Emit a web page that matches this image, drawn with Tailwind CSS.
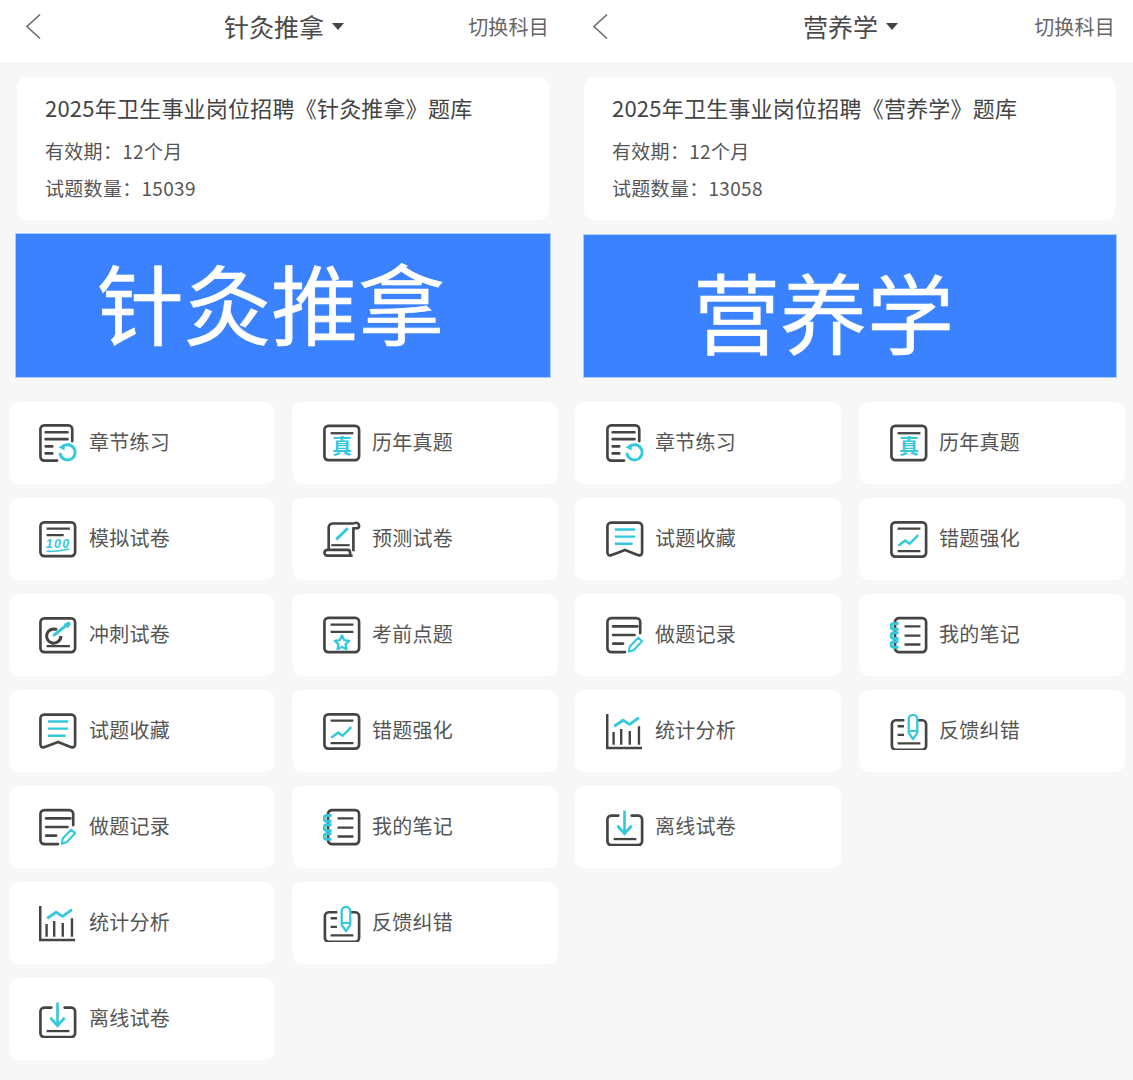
<!DOCTYPE html>
<html lang="zh-CN">
<head>
  <meta charset="UTF-8">
  <meta name="viewport" content="width=device-width, initial-scale=1.0">
  <title>题库</title>
  <script src="https://cdn.jsdelivr.net/npm/@tailwindcss/browser@4"></script>
</head>
<body class="bg-[#f7f7f7] font-['Noto_Sans_CJK_SC',sans-serif] text-[#4d4d4d]">

  <!-- 图标 -->
  <svg class="hidden">
    <defs>
      <symbol id="i-chapter" viewBox="0 0 40 40">
        <g fill="none" stroke="#444" stroke-width="2.8" stroke-linecap="round">
          <path d="M19 38.500H5.500a4 4 0 0 1-4-4V5.500a4 4 0 0 1 4-4H31a4 4 0 0 1 4 4V18"/>
          <path d="M7 8.700H30M7 16H30M7 23.500H14M7 31H14"/>
        </g>
        <path d="M24 24.500a8 8 0 1 1-2 6" fill="none" stroke="#33c8dc" stroke-width="3"/>
        <path d="M20.500 24.500l6.500-3.500v7z" fill="#33c8dc"/>
      </symbol>
      <symbol id="i-mock" viewBox="0 0 40 40">
        <rect x="1.500" y="2.500" width="36.500" height="35.500" rx="4" fill="none" stroke="#444" stroke-width="2.800"/>
        <path d="M8 9H32.500M8 16H26" stroke="#444" stroke-width="2.400"/>
        <text x="7" y="29" font-family="Liberation Sans" font-size="13" font-style="italic" font-weight="700" fill="#33c8dc" textLength="25">100</text>
        <path d="M8 33Q20 33.500 32 30.500" fill="none" stroke="#33c8dc" stroke-width="1.600"/>
      </symbol>
      <symbol id="i-sprint" viewBox="0 0 40 40">
        <rect x="1.500" y="2.500" width="36.500" height="35.500" rx="4" fill="none" stroke="#444" stroke-width="2.800"/>
        <path d="M8 31.700H32.500" stroke="#444" stroke-width="2.400"/>
        <path d="M19 14.500a7.500 7.500 0 1 0 4 6.500" fill="none" stroke="#444" stroke-width="3.200"/>
        <path d="M16 20L31 8" stroke="#33c8dc" stroke-width="3.200" stroke-linecap="round"/>
        <path d="M26 8.500l6-3 1.500 3.500-3.500 4z" fill="#33c8dc"/>
      </symbol>
      <symbol id="i-collect" viewBox="0 0 40 40">
        <path d="M5.500 2.700H34a4 4 0 0 1 4 4V34q0 4-4 3L20 31.500 5.500 37q-4 1-4-3V6.700a4 4 0 0 1 4-4z" fill="none" stroke="#444" stroke-width="2.800" stroke-linejoin="round"/>
        <path d="M9.300 10H30.700M9.300 17.500H30.700M9.300 25H28" stroke="#33c8dc" stroke-width="2.600"/>
      </symbol>
      <symbol id="i-record" viewBox="0 0 40 40">
        <g fill="none" stroke="#444" stroke-width="2.800" stroke-linecap="round">
          <path d="M20 38H5.500a4 4 0 0 1-4-4V6.300a4 4 0 0 1 4-4H32a4 4 0 0 1 4 4V18"/>
          <path d="M7.500 11H33M7.500 20H30M7.500 29H18"/>
        </g>
        <path d="M24 37.500l1-5.500 9-9 4 3.500-9 9.500z" fill="none" stroke="#33c8dc" stroke-width="2.200" stroke-linejoin="round"/>
      </symbol>
      <symbol id="i-stats" viewBox="0 0 40 40">
        <path d="M1.300 2V38H38" fill="none" stroke="#444" stroke-width="2.600"/>
        <path d="M8 21V34.500M16 18V34.500M25 20V34.500M34.700 15V34.500" stroke="#444" stroke-width="2.500"/>
        <path d="M8.700 15L18 8.700 25 13 34.700 6" fill="none" stroke="#33c8dc" stroke-width="3"/>
      </symbol>
      <symbol id="i-offline" viewBox="0 0 40 40">
        <path d="M13 8H5.500a4 4 0 0 0-4 4V35a4 4 0 0 0 4 4H34a4 4 0 0 0 4-4V12a4 4 0 0 0-4-4H27" fill="none" stroke="#444" stroke-width="2.800" stroke-linecap="round"/>
        <path d="M8 32.700H32" stroke="#444" stroke-width="2.400"/>
        <path d="M19.500 2.700V27M12 18.700L19.500 27 27 18.700" fill="none" stroke="#33c8dc" stroke-width="2.800"/>
      </symbol>
      <symbol id="i-past" viewBox="0 0 40 40">
        <rect x="1.500" y="2" width="36.500" height="36" rx="4" fill="none" stroke="#444" stroke-width="2.800"/>
        <path d="M8 9.700H32" stroke="#444" stroke-width="2.400"/>
        <text x="20" y="31.500" text-anchor="middle" font-family="Noto Sans CJK SC" font-size="21" font-weight="700" fill="#33c8dc">真</text>
      </symbol>
      <symbol id="i-predict" viewBox="0 0 40 40">
        <g fill="none" stroke="#444" stroke-width="2.800" stroke-linejoin="round">
          <path d="M33 3.700H10a4 4 0 0 0-4 4V31"/>
          <path d="M33 3.700a3 3 0 0 1 5 2.500q0 2.500-3 2.500H32V33"/>
          <path d="M30 37.500H4.500a2.700 2.700 0 0 1 0-6H26q2.500 0 2.500 3t1.500 3z"/>
        </g>
        <path d="M8.700 26.500H28" stroke="#444" stroke-width="2.200"/>
        <path d="M14 20.500L26 8.700" stroke="#33c8dc" stroke-width="3.200"/>
      </symbol>
      <symbol id="i-point" viewBox="0 0 40 40">
        <rect x="1.500" y="2" width="36.500" height="36" rx="4" fill="none" stroke="#444" stroke-width="2.800"/>
        <path d="M8 9H32M8 16.700H32" stroke="#444" stroke-width="2.400"/>
        <path d="M20 20.500l2.300 4.900 5.300.700-3.900 3.700 1 5.300-4.700-2.600-4.700 2.600 1-5.300-3.900-3.700 5.300-.7z" fill="none" stroke="#33c8dc" stroke-width="2.400" stroke-linejoin="round"/>
      </symbol>
      <symbol id="i-wrong" viewBox="0 0 40 40">
        <rect x="1.500" y="2.500" width="36.500" height="36" rx="4" fill="none" stroke="#444" stroke-width="2.800"/>
        <path d="M8 9H32M8 32.700H32" stroke="#444" stroke-width="2.400"/>
        <path d="M8.700 27L16 21.700 20.700 25 29.700 16" fill="none" stroke="#33c8dc" stroke-width="2.600"/>
      </symbol>
      <symbol id="i-note" viewBox="0 0 40 40">
        <path d="M9 2.300H34a4 4 0 0 1 4 4V34a4 4 0 0 1-4 4H9a4 4 0 0 1-3.700-4V6.300A4 4 0 0 1 9 2.300z" fill="none" stroke="#444" stroke-width="2.800"/>
        <path d="M15.300 11H32M15.300 20.700H32M15.300 30H32" stroke="#444" stroke-width="2.400"/>
        <g fill="none" stroke="#33c8dc" stroke-width="3.200">
          <path d="M9 8H4a3 3 0 0 0 0 6H9M9 17.700H4a3 3 0 0 0 0 6H9M9 27H4a3 3 0 0 0 0 6H9"/>
        </g>
      </symbol>
      <symbol id="i-feedback" viewBox="0 0 40 40">
        <path d="M14 8.700H6a4 4 0 0 0-4 4V35.700a4 4 0 0 0 4 4H34a4 4 0 0 0 4-4V12.700a4 4 0 0 0-4-4H30" fill="none" stroke="#444" stroke-width="2.800" stroke-linecap="round"/>
        <path d="M8 15H14.700M8 24H14.700M8 33H32" stroke="#444" stroke-width="2.400"/>
        <path d="M19.700 7.500a4.500 4.500 0 0 1 9 0V22L24.200 28.500 19.700 22z" fill="none" stroke="#33c8dc" stroke-width="2.400" stroke-linejoin="round"/>
        <path d="M19.700 20H28.700" stroke="#33c8dc" stroke-width="2"/>
      </symbol>
    </defs>
  </svg>

  <div class="flex w-[1133px] h-[1080px] overflow-hidden">

    <!-- 左：针灸推拿 -->
    <section class="w-[566px] shrink-0">
      <header class="h-[62px] bg-white flex items-center justify-between pl-[25px] pr-[17px] pb-[9px]">
        <div class="w-[94px]">
          <svg width="16" height="27" viewBox="0 0 16 27" fill="none" stroke="#707070" stroke-width="1.700"><path d="M15 1.500L2 13.500 15 25.500"/></svg>
        </div>
        <div class="flex items-center gap-2 text-[25px] leading-none text-[#4a4a4a]">
          <span>针灸推拿</span>
          <span class="w-0 h-0 border-x-[6px] border-x-transparent border-t-[7px] border-t-[#444]"></span>
        </div>
        <div class="w-[100px] text-right text-[20px] tracking-[0.2px] text-[#666]">切换科目</div>
      </header>

      <div class="ml-[17px] mt-[15px] w-[532px] h-[143px] rounded-[10px] bg-white pl-[28px] pt-[13px]">
        <h2 class="text-[22px] tracking-[0.22px] leading-[34px] text-[#444] whitespace-nowrap">2025年卫生事业岗位招聘《针灸推拿》题库</h2>
        <p class="mt-[13px] text-[19px] tracking-[0.3px] leading-[28px] text-[#555]">有效期：12个月</p>
        <p class="mt-[9px] text-[19px] tracking-[0.3px] leading-[28px] text-[#555]">试题数量：15039</p>
      </div>

      <div class="ml-[15px] mt-[13px] w-[536px] h-[145px] bg-[#3a82ff] border border-[#a9cffc] flex items-center pl-[81px] pb-[9px] text-white text-[87px] [-webkit-text-stroke:0.6px_#fff] leading-none whitespace-nowrap">针灸推拿</div>

      <div class="ml-[9px] mt-[24px] grid grid-cols-[266px_266px] gap-x-[17px] gap-y-[14px]">
        <a class="h-[82px] rounded-[10px] bg-white flex items-center gap-[12px] pl-[30px] text-[20px] tracking-[0.25px] text-[#555]"><svg class="size-[38px] shrink-0"><use href="#i-chapter"/></svg><span class="pb-[2px]">章节练习</span></a>
        <a class="h-[82px] rounded-[10px] bg-white flex items-center gap-[11px] pl-[31px] text-[20px] tracking-[0.25px] text-[#555]"><svg class="size-[38px] shrink-0"><use href="#i-past"/></svg><span class="pb-[2px]">历年真题</span></a>
        <a class="h-[82px] rounded-[10px] bg-white flex items-center gap-[12px] pl-[30px] text-[20px] tracking-[0.25px] text-[#555]"><svg class="size-[38px] shrink-0"><use href="#i-mock"/></svg><span class="pb-[2px]">模拟试卷</span></a>
        <a class="h-[82px] rounded-[10px] bg-white flex items-center gap-[11px] pl-[31px] text-[20px] tracking-[0.25px] text-[#555]"><svg class="size-[38px] shrink-0"><use href="#i-predict"/></svg><span class="pb-[2px]">预测试卷</span></a>
        <a class="h-[82px] rounded-[10px] bg-white flex items-center gap-[12px] pl-[30px] text-[20px] tracking-[0.25px] text-[#555]"><svg class="size-[38px] shrink-0"><use href="#i-sprint"/></svg><span class="pb-[2px]">冲刺试卷</span></a>
        <a class="h-[82px] rounded-[10px] bg-white flex items-center gap-[11px] pl-[31px] text-[20px] tracking-[0.25px] text-[#555]"><svg class="size-[38px] shrink-0"><use href="#i-point"/></svg><span class="pb-[2px]">考前点题</span></a>
        <a class="h-[82px] rounded-[10px] bg-white flex items-center gap-[12px] pl-[30px] text-[20px] tracking-[0.25px] text-[#555]"><svg class="size-[38px] shrink-0"><use href="#i-collect"/></svg><span class="pb-[2px]">试题收藏</span></a>
        <a class="h-[82px] rounded-[10px] bg-white flex items-center gap-[11px] pl-[31px] text-[20px] tracking-[0.25px] text-[#555]"><svg class="size-[38px] shrink-0"><use href="#i-wrong"/></svg><span class="pb-[2px]">错题强化</span></a>
        <a class="h-[82px] rounded-[10px] bg-white flex items-center gap-[12px] pl-[30px] text-[20px] tracking-[0.25px] text-[#555]"><svg class="size-[38px] shrink-0"><use href="#i-record"/></svg><span class="pb-[2px]">做题记录</span></a>
        <a class="h-[82px] rounded-[10px] bg-white flex items-center gap-[11px] pl-[31px] text-[20px] tracking-[0.25px] text-[#555]"><svg class="size-[38px] shrink-0"><use href="#i-note"/></svg><span class="pb-[2px]">我的笔记</span></a>
        <a class="h-[82px] rounded-[10px] bg-white flex items-center gap-[12px] pl-[30px] text-[20px] tracking-[0.25px] text-[#555]"><svg class="size-[38px] shrink-0"><use href="#i-stats"/></svg><span class="pb-[2px]">统计分析</span></a>
        <a class="h-[82px] rounded-[10px] bg-white flex items-center gap-[11px] pl-[31px] text-[20px] tracking-[0.25px] text-[#555]"><svg class="size-[38px] shrink-0"><use href="#i-feedback"/></svg><span class="pb-[2px]">反馈纠错</span></a>
        <a class="h-[82px] rounded-[10px] bg-white flex items-center gap-[12px] pl-[30px] text-[20px] tracking-[0.25px] text-[#555]"><svg class="size-[38px] shrink-0"><use href="#i-offline"/></svg><span class="pb-[2px]">离线试卷</span></a>
      </div>
    </section>

    <!-- 右：营养学 -->
    <section class="w-[567px] shrink-0">
      <header class="h-[62px] bg-white flex items-center justify-between pl-[26px] pr-[18px] pb-[9px]">
        <div class="w-[94px]">
          <svg width="16" height="27" viewBox="0 0 16 27" fill="none" stroke="#707070" stroke-width="1.700"><path d="M15 1.500L2 13.500 15 25.500"/></svg>
        </div>
        <div class="flex items-center gap-2 text-[25px] leading-none text-[#4a4a4a]">
          <span>营养学</span>
          <span class="w-0 h-0 border-x-[6px] border-x-transparent border-t-[7px] border-t-[#444]"></span>
        </div>
        <div class="w-[100px] text-right text-[20px] tracking-[0.2px] text-[#666]">切换科目</div>
      </header>

      <div class="ml-[18px] mt-[15px] w-[532px] h-[143px] rounded-[10px] bg-white pl-[28px] pt-[13px]">
        <h2 class="text-[22px] tracking-[0.22px] leading-[34px] text-[#444] whitespace-nowrap">2025年卫生事业岗位招聘《营养学》题库</h2>
        <p class="mt-[13px] text-[19px] tracking-[0.3px] leading-[28px] text-[#555]">有效期：12个月</p>
        <p class="mt-[9px] text-[19px] tracking-[0.3px] leading-[28px] text-[#555]">试题数量：13058</p>
      </div>

      <div class="ml-[17px] mt-[14px] w-[534px] h-[144px] bg-[#3a82ff] border border-[#a9cffc] flex items-center pl-[109px] pt-[8px] text-white text-[87px] [-webkit-text-stroke:0.6px_#fff] leading-none whitespace-nowrap">营养学</div>

      <div class="ml-[9px] mt-[24px] grid grid-cols-[266px_266px] gap-x-[18px] gap-y-[14px]">
        <a class="h-[82px] rounded-[10px] bg-white flex items-center gap-[11px] pl-[31px] text-[20px] tracking-[0.25px] text-[#555]"><svg class="size-[38px] shrink-0"><use href="#i-chapter"/></svg><span class="pb-[2px]">章节练习</span></a>
        <a class="h-[82px] rounded-[10px] bg-white flex items-center gap-[11px] pl-[31px] text-[20px] tracking-[0.25px] text-[#555]"><svg class="size-[38px] shrink-0"><use href="#i-past"/></svg><span class="pb-[2px]">历年真题</span></a>
        <a class="h-[82px] rounded-[10px] bg-white flex items-center gap-[11px] pl-[31px] text-[20px] tracking-[0.25px] text-[#555]"><svg class="size-[38px] shrink-0"><use href="#i-collect"/></svg><span class="pb-[2px]">试题收藏</span></a>
        <a class="h-[82px] rounded-[10px] bg-white flex items-center gap-[11px] pl-[31px] text-[20px] tracking-[0.25px] text-[#555]"><svg class="size-[38px] shrink-0"><use href="#i-wrong"/></svg><span class="pb-[2px]">错题强化</span></a>
        <a class="h-[82px] rounded-[10px] bg-white flex items-center gap-[11px] pl-[31px] text-[20px] tracking-[0.25px] text-[#555]"><svg class="size-[38px] shrink-0"><use href="#i-record"/></svg><span class="pb-[2px]">做题记录</span></a>
        <a class="h-[82px] rounded-[10px] bg-white flex items-center gap-[11px] pl-[31px] text-[20px] tracking-[0.25px] text-[#555]"><svg class="size-[38px] shrink-0"><use href="#i-note"/></svg><span class="pb-[2px]">我的笔记</span></a>
        <a class="h-[82px] rounded-[10px] bg-white flex items-center gap-[11px] pl-[31px] text-[20px] tracking-[0.25px] text-[#555]"><svg class="size-[38px] shrink-0"><use href="#i-stats"/></svg><span class="pb-[2px]">统计分析</span></a>
        <a class="h-[82px] rounded-[10px] bg-white flex items-center gap-[11px] pl-[31px] text-[20px] tracking-[0.25px] text-[#555]"><svg class="size-[38px] shrink-0"><use href="#i-feedback"/></svg><span class="pb-[2px]">反馈纠错</span></a>
        <a class="h-[82px] rounded-[10px] bg-white flex items-center gap-[11px] pl-[31px] text-[20px] tracking-[0.25px] text-[#555]"><svg class="size-[38px] shrink-0"><use href="#i-offline"/></svg><span class="pb-[2px]">离线试卷</span></a>
      </div>
    </section>
  </div>
</body>
</html>
